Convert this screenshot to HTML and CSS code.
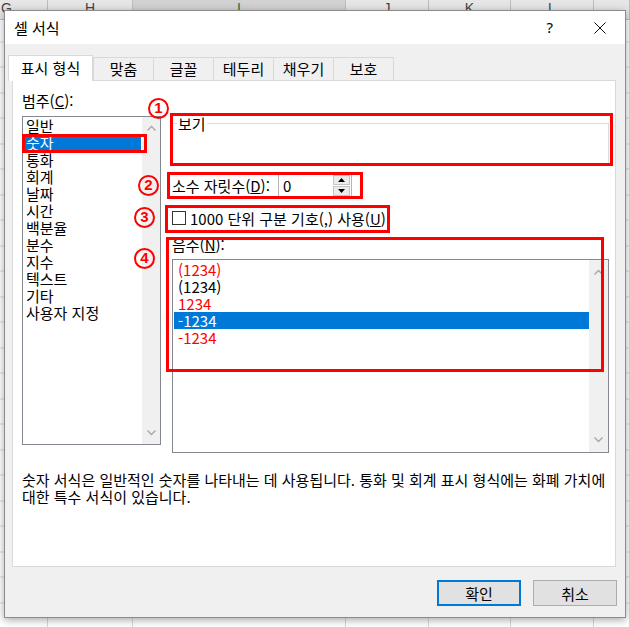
FILE: index.html
```html
<!DOCTYPE html>
<html lang="ko">
<head>
<meta charset="utf-8">
<title>셀 서식</title>
<link rel="stylesheet" href="styles.css">
</head>
<body>
  <div class="sheet">
    <div class="column col-g"><div class="col-head">G</div><div class="cells"></div></div>
    <div class="column col-h"><div class="col-head">H</div><div class="cells"></div></div>
    <div class="column col-i"><div class="col-head active">I</div><div class="cells"></div></div>
    <div class="column col-j"><div class="col-head">J</div><div class="cells"></div></div>
    <div class="column col-k"><div class="col-head">K</div><div class="cells"></div></div>
    <div class="column col-l"><div class="col-head">L</div><div class="cells"></div></div>
    <div class="column col-m"><div class="col-head"></div><div class="cells"></div></div>
  </div>

  <div class="dialog">
    <div class="titlebar">
      <span class="title">셀 서식</span>
      <span class="help">?</span>
      <span class="close">
        <svg width="12" height="12" viewBox="0 0 12 12"><path d="M0.5 0.5 L11.5 11.5 M11.5 0.5 L0.5 11.5" stroke="#111" stroke-width="1" fill="none"/></svg>
      </span>
    </div>

    <div class="tabs">
      <div class="tab selected">표시 형식</div>
      <div class="tab">맞춤</div>
      <div class="tab">글꼴</div>
      <div class="tab">테두리</div>
      <div class="tab">채우기</div>
      <div class="tab">보호</div>
    </div>

    <div class="panel">
      <div class="layout">
        <div class="left">
          <div class="label">범주(<u>C</u>):</div>
          <div class="listbox cat-list">
            <div class="items">
              <div class="item">일반</div>
              <div class="item selected">숫자</div>
              <div class="item">통화</div>
              <div class="item">회계</div>
              <div class="item">날짜</div>
              <div class="item">시간</div>
              <div class="item">백분율</div>
              <div class="item">분수</div>
              <div class="item">지수</div>
              <div class="item">텍스트</div>
              <div class="item">기타</div>
              <div class="item">사용자 지정</div>
            </div>
            <div class="scrollbar">
              <div class="arrow"><svg width="9" height="6" viewBox="0 0 9 6"><polyline points="0.5,5.5 4.5,1.5 8.5,5.5" fill="none" stroke="#a6a6a6" stroke-width="1.3"/></svg></div>
              <div class="arrow"><svg width="9" height="6" viewBox="0 0 9 6"><polyline points="0.5,0.5 4.5,4.5 8.5,0.5" fill="none" stroke="#a6a6a6" stroke-width="1.3"/></svg></div>
            </div>
          </div>
        </div>

        <div class="right">
          <fieldset class="sample"><legend>보기</legend></fieldset>

          <div class="decimals">
            <span class="label">소수 자릿수(<u>D</u>):</span>
            <div class="spin">
              <span class="spin-value">0</span>
              <div class="spin-btns">
                <span class="spin-btn"><svg width="7" height="4" viewBox="0 0 7 4"><polygon points="0,4 3.5,0 7,4" fill="#000"/></svg></span>
                <span class="spin-btn"><svg width="7" height="4" viewBox="0 0 7 4"><polygon points="0,0 7,0 3.5,4" fill="#000"/></svg></span>
              </div>
            </div>
          </div>

          <div class="thousands">
            <span class="checkbox"></span>
            <span>1000 단위 구분 기호(,) 사용(<u>U</u>)</span>
          </div>

          <div class="label neg-label">음수(<u>N</u>):</div>
          <div class="listbox neg-list">
            <div class="items">
              <div class="item red">(1234)</div>
              <div class="item">(1234)</div>
              <div class="item red">1234</div>
              <div class="item selected">-1234</div>
              <div class="item red">-1234</div>
            </div>
            <div class="scrollbar">
              <div class="arrow"><svg width="9" height="6" viewBox="0 0 9 6"><polyline points="0.5,5.5 4.5,1.5 8.5,5.5" fill="none" stroke="#a6a6a6" stroke-width="1.3"/></svg></div>
              <div class="arrow"><svg width="9" height="6" viewBox="0 0 9 6"><polyline points="0.5,0.5 4.5,4.5 8.5,0.5" fill="none" stroke="#a6a6a6" stroke-width="1.3"/></svg></div>
            </div>
          </div>
        </div>
      </div>

      <p class="desc">숫자 서식은 일반적인 숫자를 나타내는 데 사용됩니다. 통화 및 회계 표시 형식에는 화폐 가치에<br>대한 특수 서식이 있습니다.</p>
    </div>

    <div class="buttons">
      <button class="btn default">확인</button>
      <button class="btn">취소</button>
    </div>

    <!-- red annotation marks drawn over the dialog -->
    <div class="mark mark-tab"></div>
    <div class="mark mark-cat"></div>
    <div class="mark mark-1"></div>
    <div class="mark mark-2"></div>
    <div class="mark mark-3"></div>
    <div class="mark mark-4"></div>
    <div class="num num-1">1</div>
    <div class="num num-2">2</div>
    <div class="num num-3">3</div>
    <div class="num num-4">4</div>
  </div>
</body>
</html>
```

FILE: styles.css
```css
* {
    box-sizing: border-box;
}
body {
    margin: 0;
    width: 630px;
    height: 627px;
    overflow: hidden;
    position: relative;
    background-color: #ffffff;
    font-family: "Noto Sans CJK KR", "Noto Sans", sans-serif;
    font-size: 15px;
    line-height: 17px;
    color: #000;
}

/* excel sheet behind the dialog */
.sheet {
    display: flex;
    width: 630px;
    height: 627px;
}
.column {
    flex: none;
    display: flex;
    flex-direction: column;
}
.col-g { width: 48px; }
.col-h { width: 85px; }
.col-i { width: 213px; }
.col-j { width: 83px; }
.col-k { width: 82px; }
.col-l { width: 83px; }
.col-m { width: 36px; }
.col-head {
    height: 20px;
    background-color: #e6e6e6;
    border-right: 1px solid #bdbdbd;
    border-bottom: 1px solid #bdbdbd;
    text-align: center;
    font-family: "Liberation Sans", Arial, sans-serif;
    font-size: 14px;
    line-height: 16px;
    color: #444;
}
.col-g .col-head {
    text-align: left;
    padding-left: 1px;
}
.col-head.active {
    background-color: #d2d2d2;
    color: #1e6e42;
}
.cells {
    flex: 1;
    border-right: 1px solid #d9d9d9;
    background-image: repeating-linear-gradient(to bottom, #fff 0, #fff 24.5px, #d9d9d9 24.5px, #d9d9d9 25.5px);
    background-position: 0 -3.5px;
}

/* dialog window */
.dialog {
    position: absolute;
    left: 4px;
    top: 10px;
    width: 622px;
    height: 608px;
    background-color: #f0f0f0;
    border: 1px solid #8c8c8c;
    box-shadow: 0 2px 8px rgba(0, 0, 0, 0.35);
    display: flex;
    flex-direction: column;
}
.titlebar {
    height: 33px;
    background-color: #fff;
    display: flex;
    align-items: center;
    padding-left: 9px;
}
.help {
    margin-left: auto;
    margin-right: 41px;
    font-family: "Noto Sans", sans-serif;
    font-size: 15px;
}
.close {
    display: flex;
    margin-right: 19px;
}

.tabs {
    display: flex;
    align-items: flex-end;
    height: 25px;
    margin-top: 11px;
    padding-left: 3px;
}
.tab {
    width: 61px;
    height: 23px;
    margin-left: -1px;
    border: 1px solid #d9d9d9;
    border-bottom: none;
    background-color: #f0f0f0;
    text-align: center;
    line-height: 21px;
}
.tab.selected {
    width: 85px;
    height: 26px;
    margin-left: 0;
    margin-bottom: -1px;
    background-color: #fff;
    line-height: 24px;
    position: relative;
    z-index: 1;
}
.tab.selected + .tab {
    margin-left: 0;
}

.panel {
    height: 487px;
    margin: 0 9px 0 7px;
    background-color: #fff;
    border: 1px solid #d9d9d9;
    padding: 11px 6px 0 9px;
}
.layout {
    display: grid;
    grid-template-columns: 139px 1fr;
    column-gap: 11px;
}
.label {
    white-space: nowrap;
}
.left .label {
    margin-bottom: 7px;
}

.listbox {
    display: flex;
    border: 1px solid #828790;
    background-color: #fff;
}
.cat-list {
    height: 329px;
}
.neg-list {
    height: 194px;
    margin-top: 6px;
}
.items {
    flex: 1;
}
.item {
    height: 17px;
    line-height: 17px;
    white-space: nowrap;
}
.cat-list .item {
    margin: 0 1px;
    padding-left: 2px;
}
.neg-list .items {
    padding-top: 1px;
}
.neg-list .item {
    margin-left: 1px;
    padding-left: 4px;
}
.item.red {
    color: #ff0000;
}
.item.selected {
    background-color: #0078d7;
    color: #fff;
}
.scrollbar {
    flex: none;
    background-color: #f0f0f0;
    display: flex;
    flex-direction: column;
    justify-content: space-between;
}
.cat-list .scrollbar {
    width: 18px;
}
.neg-list .scrollbar {
    width: 19px;
}
.arrow {
    display: flex;
    align-items: center;
    justify-content: center;
}
.cat-list .arrow {
    height: 22px;
}
.neg-list .arrow {
    height: 24px;
}

.sample {
    margin: 23px 0 0 0;
    padding: 0;
    min-width: 0;
    height: 49px;
    border: 1px solid #dcdcdc;
}
.sample legend {
    margin-left: 4px;
    padding: 0 1px;
    line-height: 17px;
}

.decimals {
    display: flex;
    align-items: center;
    height: 24px;
    margin-top: 9px;
}
.decimals .label {
    width: 106px;
}
.spin {
    width: 74px;
    height: 24px;
    border: 1px solid #b4b4b4;
    display: flex;
    align-items: center;
    justify-content: space-between;
    padding-left: 4px;
}
.spin-btns {
    display: flex;
    flex-direction: column;
    gap: 1px;
    margin-right: 1px;
}
.spin-btn {
    width: 17px;
    height: 10px;
    background-color: #ececec;
    border: 1px solid #c4c4c4;
    display: flex;
    align-items: center;
    justify-content: center;
}

.thousands {
    display: flex;
    align-items: center;
    gap: 4px;
    height: 18px;
    margin-top: 12px;
    white-space: nowrap;
}
.checkbox {
    width: 14px;
    height: 14px;
    border: 1px solid #333;
    background-color: #fff;
}
.neg-label {
    margin-top: 9px;
}

.desc {
    margin: 18px 0 0 0;
    white-space: nowrap;
}

.buttons {
    display: flex;
    justify-content: flex-end;
    gap: 12px;
    margin-top: 13px;
    padding-right: 8px;
}
.btn {
    width: 84px;
    height: 26px;
    padding: 0;
    background-color: #e1e1e1;
    border: 1px solid #adadad;
    font: inherit;
    color: #000;
}
.btn.default {
    border: 2px solid #0078d7;
}

/* annotations */
.mark {
    position: absolute;
    border: 3px solid #ff0000;
}
.mark-tab { left: 5px; top: 44px; width: 79px; height: 25px; }
.mark-cat { left: 17px; top: 123px; width: 125px; height: 19px; }
.mark-1 { left: 165px; top: 102px; width: 443px; height: 53px; }
.mark-2 { left: 162px; top: 161px; width: 196px; height: 27px; }
.mark-3 { left: 160px; top: 194px; width: 225px; height: 28px; }
.mark-4 { left: 161px; top: 226px; width: 438px; height: 135px; }
.num {
    position: absolute;
    width: 21px;
    height: 21px;
    border: 2.5px solid #ff0000;
    border-radius: 50%;
    color: #ff0000;
    font-family: "Liberation Sans", Arial, sans-serif;
    font-weight: bold;
    font-size: 15px;
    line-height: 16px;
    text-align: center;
}
.num-1 { left: 143px; top: 87px; }
.num-2 { left: 133px; top: 164px; }
.num-3 { left: 129px; top: 196px; }
.num-4 { left: 129px; top: 237px; }
```
